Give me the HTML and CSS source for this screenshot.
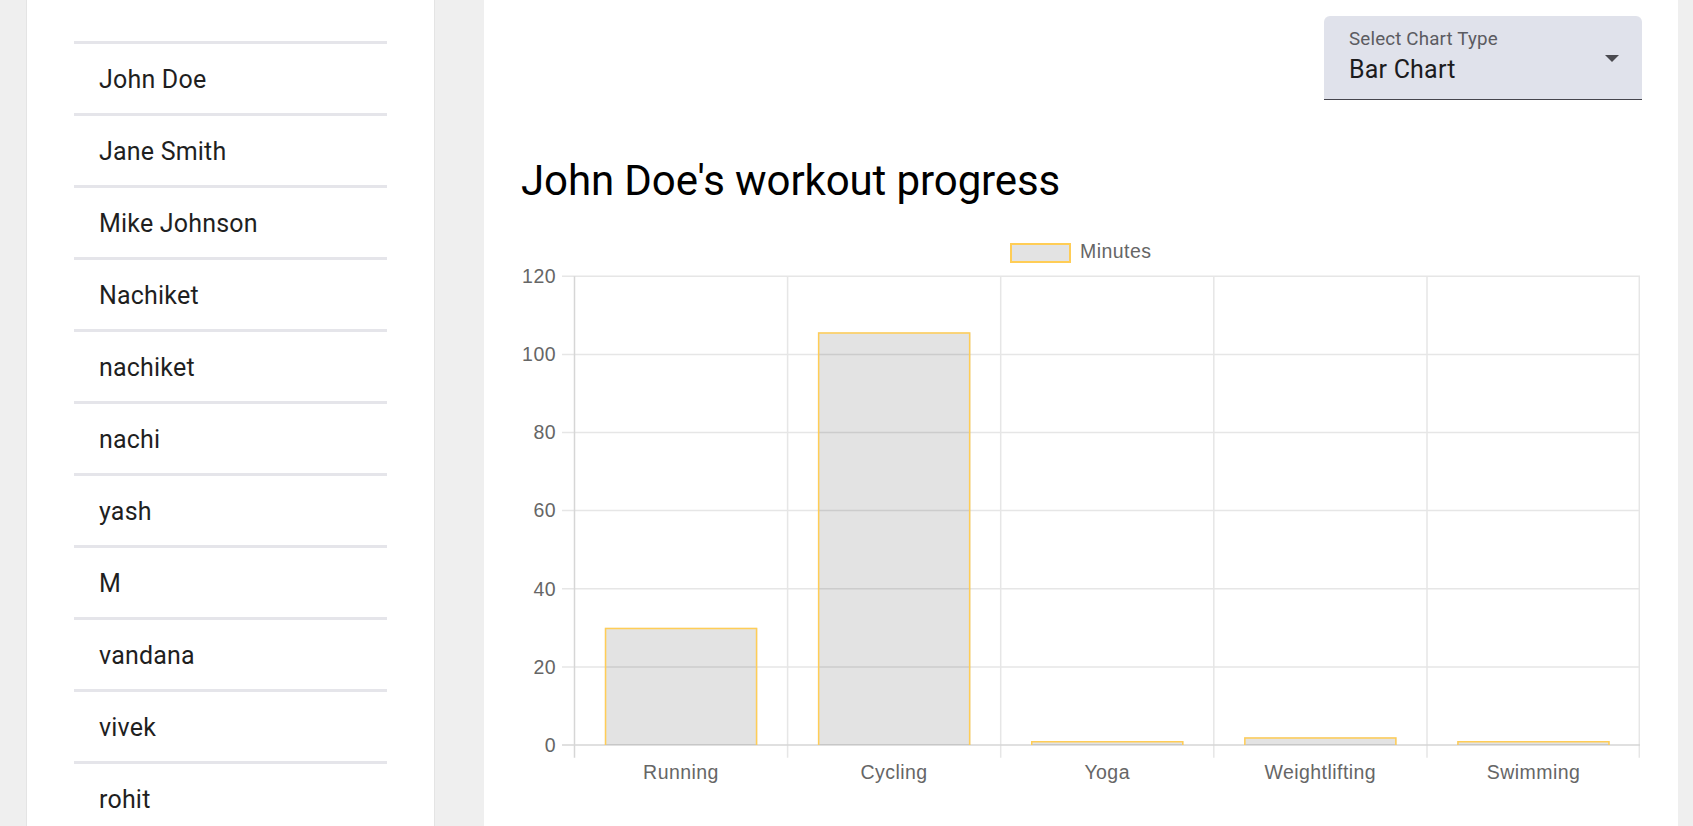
FILE: index.html
```html
<!DOCTYPE html>
<html lang="en">
<head>
<meta charset="utf-8">
<title>Workout progress</title>
<link rel="stylesheet" href="styles.css">
</head>
<body>
<div class="layout">
  <aside class="sidebar">
    <ul class="user-list">
      <li class="user-item">John Doe</li>
      <li class="user-item">Jane Smith</li>
      <li class="user-item">Mike Johnson</li>
      <li class="user-item">Nachiket</li>
      <li class="user-item">nachiket</li>
      <li class="user-item">nachi</li>
      <li class="user-item">yash</li>
      <li class="user-item">M</li>
      <li class="user-item">vandana</li>
      <li class="user-item">vivek</li>
      <li class="user-item">rohit</li>
    </ul>
  </aside>
  <main class="main">
    <div class="toolbar">
      <div class="select">
        <div class="select-text">
          <div class="select-label">Select Chart Type</div>
          <div class="select-value">Bar Chart</div>
        </div>
        <svg class="select-arrow" width="14" height="7" viewBox="0 0 14 7"><path d="M0 0 L14 0 L7 7 Z" fill="#4a4a50"/></svg>
      </div>
    </div>
    <h1 class="title">John Doe's workout progress</h1>
    <svg class="chart" width="1119" height="620" viewBox="0 0 1119 620">
      <g class="grid" stroke="#e6e6e6" stroke-width="1.5" fill="none">
        <line x1="41" y1="70.3" x2="1119" y2="70.3"/>
        <line x1="41" y1="148.4" x2="1119" y2="148.4"/>
        <line x1="41" y1="226.5" x2="1119" y2="226.5"/>
        <line x1="41" y1="304.6" x2="1119" y2="304.6"/>
        <line x1="41" y1="382.8" x2="1119" y2="382.8"/>
        <line x1="41" y1="460.9" x2="1119" y2="460.9"/>
        <line x1="266.6" y1="70.3" x2="266.6" y2="551.7"/>
        <line x1="479.7" y1="70.3" x2="479.7" y2="551.7"/>
        <line x1="692.8" y1="70.3" x2="692.8" y2="551.7"/>
        <line x1="906" y1="70.3" x2="906" y2="551.7"/>
        <line x1="1118.3" y1="70.3" x2="1118.3" y2="551.7"/>
      </g>
      <g class="axes" stroke="#d6d6d6" stroke-width="1.5" fill="none">
        <line x1="41" y1="539" x2="1119" y2="539"/>
        <line x1="53.5" y1="70.3" x2="53.5" y2="551.7"/>
      </g>
      <g class="bars">
        <rect x="83.8" y="421.8" width="152.5" height="117.2" fill="rgba(0,0,0,0.11)"/>
        <path d="M84.55 539 V422.55 H235.55 V539" fill="none" stroke="#ffcd56" stroke-width="1.5"/>
        <rect x="296.9" y="126.3" width="152.5" height="412.7" fill="rgba(0,0,0,0.11)"/>
        <path d="M297.65 539 V127.05 H448.65 V539" fill="none" stroke="#ffcd56" stroke-width="1.5"/>
        <rect x="510" y="535.1" width="152.5" height="3.9" fill="rgba(0,0,0,0.11)"/>
        <path d="M510.75 539 V535.85 H661.75 V539" fill="none" stroke="#ffcd56" stroke-width="1.5"/>
        <rect x="723.1" y="531.2" width="152.5" height="7.8" fill="rgba(0,0,0,0.11)"/>
        <path d="M723.85 539 V531.95 H874.85 V539" fill="none" stroke="#ffcd56" stroke-width="1.5"/>
        <rect x="936.2" y="535.1" width="152.5" height="3.9" fill="rgba(0,0,0,0.11)"/>
        <path d="M936.95 539 V535.85 H1087.95 V539" fill="none" stroke="#ffcd56" stroke-width="1.5"/>
      </g>
      <g class="legend">
        <rect x="490" y="38" width="59" height="18" fill="#e3e3e3" stroke="#ffcd56" stroke-width="2"/>
        <text x="559" y="52" class="chart-text">Minutes</text>
      </g>
      <g class="y-labels" text-anchor="end">
        <text x="35" y="77" class="chart-text">120</text>
        <text x="35" y="155.1" class="chart-text">100</text>
        <text x="35" y="233.2" class="chart-text">80</text>
        <text x="35" y="311.3" class="chart-text">60</text>
        <text x="35" y="389.5" class="chart-text">40</text>
        <text x="35" y="467.6" class="chart-text">20</text>
        <text x="35" y="545.7" class="chart-text">0</text>
      </g>
      <g class="x-labels" text-anchor="middle">
        <text x="160" y="573" class="chart-text">Running</text>
        <text x="373.1" y="573" class="chart-text">Cycling</text>
        <text x="586.2" y="573" class="chart-text">Yoga</text>
        <text x="799.3" y="573" class="chart-text">Weightlifting</text>
        <text x="1012.5" y="573" class="chart-text">Swimming</text>
      </g>
    </svg>
  </main>
</div>
</body>
</html>
```
FILE: styles.css
```css
html, body {
  margin: 0;
  padding: 0;
  height: 100%;
  overflow: hidden;
}

body {
  background: #efefef;
  font-family: Roboto, "Noto Sans", Arial, sans-serif;
  color: rgba(0, 0, 0, 0.87);
}

.layout {
  display: flex;
  height: 100vh;
  padding-left: 26px;
  gap: 49px;
}

.sidebar {
  width: 409px;
  flex: 0 0 409px;
  box-sizing: border-box;
  background: #ffffff;
  border-left: 1px solid #e4e4e4;
  border-right: 1px solid #e4e4e4;
  height: 100%;
  overflow: hidden;
}

.user-list {
  list-style: none;
  margin: 0;
  padding: 41px 47px 0 47px;
}

.user-item {
  box-sizing: border-box;
  height: 72px;
  border-top: 3px solid #e5e5ea;
  padding-left: 25px;
  padding-top: 2px;
  display: flex;
  align-items: center;
  font-size: 25px;
  letter-spacing: 0.2px;
  color: #1f1f1f;
}

.main {
  width: 1194px;
  flex: 0 0 1194px;
  box-sizing: border-box;
  background: #ffffff;
  height: 100%;
  padding: 16px 38px 0 37px;
  overflow: hidden;
}

.toolbar {
  display: flex;
  justify-content: flex-end;
  margin-right: -2px;
}

.select {
  box-sizing: border-box;
  width: 318px;
  height: 84px;
  background: #e0e2eb;
  border-radius: 6px 6px 0 0;
  border-bottom: 1.5px solid #45454d;
  padding: 12px 23px 0 25px;
  display: flex;
  justify-content: space-between;
  align-items: flex-start;
}

.select-label {
  font-size: 18.75px;
  line-height: 22px;
  letter-spacing: 0.17px;
  color: #5b5b61;
}

.select-value {
  margin-top: 5px;
  font-size: 25px;
  line-height: 29px;
  letter-spacing: 0.2px;
  color: #1c1c1e;
}

.select-arrow {
  margin-top: 27px;
}

.title {
  margin: 56px 0 0 0;
  font-size: 42px;
  line-height: 50px;
  font-weight: 400;
  letter-spacing: -0.1px;
  color: #000000;
}

.chart {
  display: block;
}

.chart-text {
  font-family: "Liberation Sans", Arial, sans-serif;
  font-size: 19.5px;
  letter-spacing: 0.45px;
  fill: #666666;
}
```
